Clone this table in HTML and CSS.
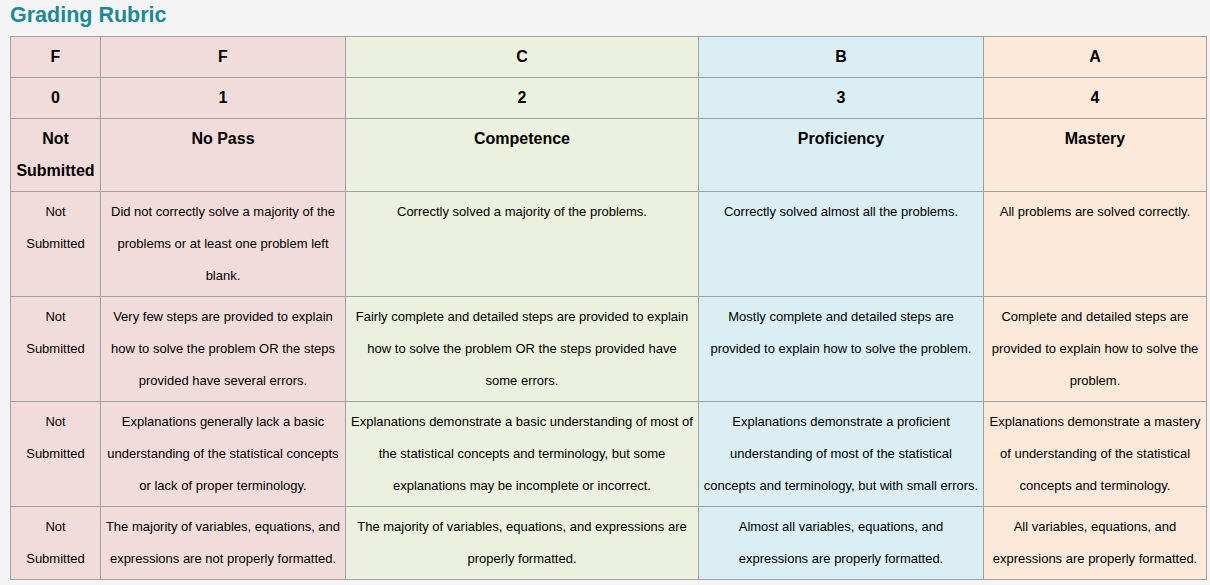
FILE: index.html
```html
<!DOCTYPE html>
<html>
<head>
<meta charset="utf-8">
<link rel="stylesheet" href="styles.css">
</head>
<body>
<h2 class="title">Grading Rubric</h2>
<table class="rubric">
<colgroup>
<col class="c1"><col class="c2"><col class="c3"><col class="c4"><col class="c5">
</colgroup>
<tr class="head">
<th class="f">F</th><th class="f">F</th><th class="c">C</th><th class="b">B</th><th class="a">A</th>
</tr>
<tr class="head">
<th class="f">0</th><th class="f">1</th><th class="c">2</th><th class="b">3</th><th class="a">4</th>
</tr>
<tr class="head">
<th class="f">Not Submitted</th><th class="f">No Pass</th><th class="c">Competence</th><th class="b">Proficiency</th><th class="a">Mastery</th>
</tr>
<tr>
<td class="f">Not Submitted</td>
<td class="f">Did not correctly solve a majority of the problems or at least one problem left blank.</td>
<td class="c">Correctly solved a majority of the problems.</td>
<td class="b">Correctly solved almost all the problems.</td>
<td class="a">All problems are solved correctly.</td>
</tr>
<tr>
<td class="f">Not Submitted</td>
<td class="f">Very few steps are provided to explain how to solve the problem OR the steps provided have several errors.</td>
<td class="c">Fairly complete and detailed steps are provided to explain how to solve the problem OR the steps provided have some errors.</td>
<td class="b">Mostly complete and detailed steps are provided to explain how to solve the problem.</td>
<td class="a">Complete and detailed steps are provided to explain how to solve the problem.</td>
</tr>
<tr>
<td class="f">Not Submitted</td>
<td class="f">Explanations generally lack a basic understanding of the statistical concepts or lack of proper terminology.</td>
<td class="c">Explanations demonstrate a basic understanding of most of the statistical concepts and terminology, but some explanations may be incomplete or incorrect.</td>
<td class="b">Explanations demonstrate a proficient understanding of most of the statistical concepts and terminology, but with small errors.</td>
<td class="a">Explanations demonstrate a mastery of understanding of the statistical concepts and terminology.</td>
</tr>
<tr>
<td class="f">Not Submitted</td>
<td class="f">The majority of variables, equations, and expressions are not properly formatted.</td>
<td class="c">The majority of variables, equations, and expressions are properly formatted.</td>
<td class="b">Almost all variables, equations, and expressions are properly formatted.</td>
<td class="a">All variables, equations, and expressions are properly formatted.</td>
</tr>
</table>
</body>
</html>
```
FILE: styles.css
```css
html, body {
  margin: 0;
  padding: 0;
  background: #f4f4f4;
}
body {
  padding: 3px 10px 0 10px;
  font-family: "Liberation Sans", Arial, sans-serif;
  color: #000;
}
.title {
  margin: 0;
  font-size: 21.5px;
  line-height: 25px;
  font-weight: bold;
  color: #1b8a94;
  height: 33px;
}
.rubric {
  border-collapse: collapse;
  table-layout: fixed;
  width: 1196px;
}
.c1 { width: 90px; }
.c2 { width: 245px; }
.c3 { width: 353px; }
.c4 { width: 285px; }
.c5 { width: 223px; }
.rubric th, .rubric td {
  border: 1px solid #a0a0a0;
  padding: 4px 5px;
  text-align: center;
  vertical-align: top;
}
.rubric td:nth-child(2),
.rubric td:nth-child(5) {
  padding-left: 2px;
  padding-right: 2px;
}
.rubric td:nth-child(4) {
  padding-left: 4px;
  padding-right: 4px;
}
.rubric th {
  font-size: 16px;
  font-weight: bold;
  line-height: 32px;
}
.rubric td {
  font-size: 13px;
  line-height: 32px;
}
.f { background: #f2dcdb; }
.c { background: #ebf1de; }
.b { background: #daeef3; }
.a { background: #fde9d9; }
```
